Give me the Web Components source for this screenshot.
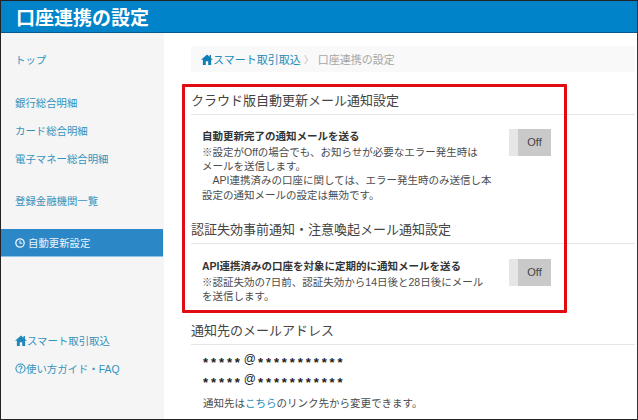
<!DOCTYPE html>
<html lang="ja"><head><meta charset="utf-8">
<style>
html,body{margin:0;padding:0;background:#fff}
body{width:638px;height:420px;overflow:hidden;font-family:"Liberation Sans","Noto Sans CJK JP",sans-serif}
</style></head><body>
<app-shell>
  <app-header slot="header">口座連携の設定</app-header>
  <side-nav slot="nav"></side-nav>
  <bread-crumb></bread-crumb>
  <settings-section title="クラウド版自動更新メール通知設定" style="--sec-top:19px">
    <setting-row label="自動更新完了の通知メールを送る">※設定がOffの場合でも、お知らせが必要なエラー発生時は<br>メールを送信します。<br>　API連携済みの口座に関しては、エラー発生時のみ送信し本<br>設定の通知メールの設定は無効です。</setting-row>
  </settings-section>
  <settings-section title="認証失効事前通知・注意喚起メール通知設定" style="--sec-top:18px;--row-top:15px">
    <setting-row label="API連携済みの口座を対象に定期的に通知メールを送る">※認証失効の7日前、認証失効から14日後と28日後にメール<br>を送信します。</setting-row>
  </settings-section>
  <settings-section title="通知先のメールアドレス" style="--sec-top:18px">
    <mail-list></mail-list>
  </settings-section>
  <red-frame slot="overlay"></red-frame>
</app-shell>
<script>
const HOME='<svg width="12" height="11" viewBox="0 0 13 12" style="flex:none"><path fill="#0f7fb5" d="M6.5 .5 0 6.2h2V12h3.2V8h2.6v4H11V6.2h2L10.8 4.3V1.2H9.3v1.8z"/></svg>';
function def(name,html){
  customElements.define(name,class extends HTMLElement{
    constructor(){super();this.attachShadow({mode:'open'}).innerHTML=typeof html==='function'?html(this):html;}
  });
}
def('app-shell',`<style>
:host{display:flex;flex-direction:column;position:relative;width:638px;height:420px;box-sizing:border-box;border:1px solid #222;border-right-color:#333;background:#fff;overflow:hidden}
.body{display:flex;flex:1;min-height:0}
main{flex:1;min-width:0;padding:13px 0 0 27px;box-sizing:border-box}
</style><slot name="header"></slot><div class="body"><slot name="nav"></slot><main><slot></slot></main></div><slot name="overlay"></slot>`);
def('app-header',`<style>
:host{display:flex;align-items:center;height:32px;flex:none;box-sizing:border-box;padding:0 0 1px 15px;background:#0083c9;border-bottom:1px solid #065a88;color:#fff;font-size:19px;font-weight:700}
</style><slot></slot>`);
def('side-nav',`<style>
:host{display:block;width:163px;flex:none;background:#f5f5f5;color:#1d8bb8;font-size:10.4px;box-sizing:border-box;padding-top:12px}
a{display:flex;align-items:center;height:28px;padding-left:14px;color:inherit;white-space:nowrap;opacity:.92}
.top{margin-bottom:15px}.reg{margin-top:14px;margin-bottom:15px}
.active{background:#2b87c6;color:#e8f3fa;height:28px;width:162px;box-sizing:border-box;border-bottom:1px solid #8cc3e6;opacity:1;gap:3px}
.foot{margin-top:69px}
</style>
<a class="top">トップ</a>
<a>銀行総合明細</a><a>カード総合明細</a><a>電子マネー総合明細</a>
<a class="reg">登録金融機関一覧</a>
<a class="active"><svg width="10" height="10" viewBox="0 0 10 10"><circle cx="5" cy="5" r="4.2" fill="none" stroke="#e8f3fa" stroke-width="1.3"/><path d="M5 2.5V5.3H7.4" fill="none" stroke="#e8f3fa" stroke-width="1.1"/></svg>自動更新設定</a>
<a class="foot">${HOME}スマート取引取込</a>
<a><svg width="11" height="11" viewBox="0 0 12 12" style="flex:none"><circle cx="6" cy="6" r="5" fill="none" stroke="#1d8bb8" stroke-width="1.1"/><path d="M4.2 4.6C4.4 2.9 7.8 3 7.7 4.8 7.6 6 6 6 6 7.4" fill="none" stroke="#1d8bb8" stroke-width="1.1"/><circle cx="6" cy="9" r=".7" fill="#1d8bb8"/></svg>使い方ガイド・FAQ</a>`);
def('bread-crumb',`<style>
:host{display:flex;align-items:center;height:26px;width:444px;box-sizing:border-box;padding-left:10px;background:#f9f9f9;font-size:11px;color:#a5a5a5;white-space:nowrap}
a{color:#1d8bb8;display:flex;align-items:center}
i{font-style:normal;margin:0 4px 0 3px;color:#bbb;font-size:10px}
</style><a>${HOME}スマート取引取込</a><i>〉</i>口座連携の設定`);
def('settings-section',el=>`<style>
:host{display:block;width:444px}
h2{margin:var(--sec-top,15px) 0 0;font-size:13px;font-weight:400;color:#444;line-height:20px;padding-bottom:3px;border-bottom:1px solid #e6e6e6;white-space:nowrap}
</style><h2>${el.getAttribute('title')}</h2><slot></slot>`);
def('setting-row',el=>`<style>
:host{display:flex;justify-content:space-between;padding:var(--row-top,14px) 0 0 11px;font-size:10.5px;line-height:14.4px;color:#4c4c4c}
b{display:block;color:#333;line-height:15.5px}
.t{white-space:nowrap}
.sw{flex:none;display:flex;width:42px;height:27px;margin:0 84px 0 0;background:#e6e6e6}
.sw span{margin-left:9px;flex:1;background:#c9c9c9;color:#444;font-size:11px;display:flex;align-items:center;justify-content:center}
</style><div class="t"><b>${el.getAttribute('label')}</b><slot></slot></div><div class="sw"><span>Off</span></div>`);
def('mail-list',`<style>
:host{display:block;padding:4px 0 0 12px;font-size:13px;color:#222}
.m{display:flex;align-items:center;height:20px;white-space:nowrap;font-family:"Liberation Sans",sans-serif}
.s{letter-spacing:2.9px;padding-top:7px;font-weight:700}
.a{margin:0 2px 0 1px;font-size:12px}
.n{margin-top:5px;color:#4c4c4c;font-size:10.5px;line-height:18px;white-space:nowrap}
a{color:#1d8bb8}
</style><div class="m"><span class="s">*****</span><span class="a">@</span><span class="s">***********</span></div><div class="m"><span class="s">*****</span><span class="a">@</span><span class="s">***********</span></div><div class="n">通知先は<a>こちら</a>のリンク先から変更できます。</div>`);
def('red-frame',`<style>
:host{position:absolute;left:181px;top:83px;width:385px;height:229px;box-sizing:border-box;border:3px solid #e00c12;border-radius:1px;pointer-events:none}
</style>`);
</script>
</body></html>
